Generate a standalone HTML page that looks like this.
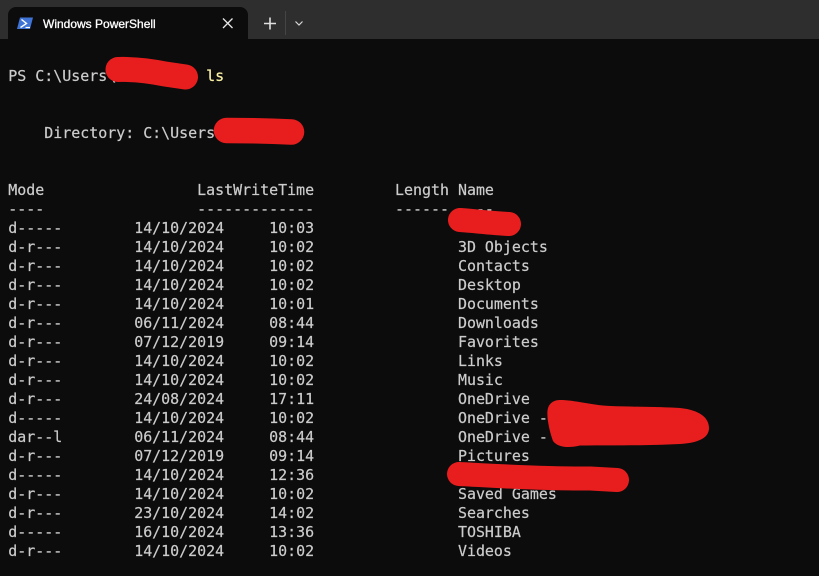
<!DOCTYPE html>
<html>
<head>
<meta charset="utf-8">
<style>
html,body{margin:0;padding:0;width:819px;height:576px;overflow:hidden;background:#0c0c0c}
#bar{position:absolute;left:0;top:0;width:819px;height:39px;background:#2e2e2e}
#tab{position:absolute;left:8px;top:7px;width:240px;height:32px;background:#0c0c0c;border-radius:8px 8px 0 0}
#title{position:absolute;left:43px;top:15px;font:12px/18px "Liberation Sans",sans-serif;-webkit-text-stroke:0.3px #fff;color:#fff;white-space:pre}
pre{position:absolute;left:8.300px;top:67px;margin:0;font:14.95px/19px "DejaVu Sans Mono",monospace;-webkit-text-stroke:0.2px #cccccc;color:#cccccc;white-space:pre}
.y{color:#f9f1a5;-webkit-text-stroke:0.2px #f9f1a5}
svg{position:absolute;left:0;top:0}
</style>
</head>
<body>
<div id="bar"></div>
<div id="tab"></div>
<div id="title">Windows PowerShell</div>
<pre>PS C:\Users\          <span class="y">ls</span>


    Directory: C:\Users


Mode                 LastWriteTime         Length Name
----                 -------------         ------ ----
d-----        14/10/2024     10:03
d-r---        14/10/2024     10:02                3D Objects
d-r---        14/10/2024     10:02                Contacts
d-r---        14/10/2024     10:02                Desktop
d-r---        14/10/2024     10:01                Documents
d-r---        06/11/2024     08:44                Downloads
d-r---        07/12/2019     09:14                Favorites
d-r---        14/10/2024     10:02                Links
d-r---        14/10/2024     10:02                Music
d-r---        24/08/2024     17:11                OneDrive
d-----        14/10/2024     10:02                OneDrive -
dar--l        06/11/2024     08:44                OneDrive -
d-r---        07/12/2019     09:14                Pictures
d-----        14/10/2024     12:36
d-r---        14/10/2024     10:02                Saved Games
d-r---        23/10/2024     14:02                Searches
d-----        16/10/2024     13:36                TOSHIBA
d-r---        14/10/2024     10:02                Videos</pre>
<svg width="819" height="576" viewBox="0 0 819 576" fill="none">
  <path d="M20 17.5 H33 L30 29 H17 Z" fill="#3f74d6"/>
  <path d="M21.5 19.5 L26.5 23.5 L20.5 27.5" stroke="#fff" stroke-width="1.4"/>
  <path d="M25.5 27.5 H30" stroke="#fff" stroke-width="1.2"/>
  <path d="M223 18.5 L232.5 28 M232.5 18.5 L223 28" stroke="#e6e6e6" stroke-width="1.3"/>
  <path d="M264 23.5 H276 M270 17.5 V29.5" stroke="#e0e0e0" stroke-width="1.6"/>
  <path d="M285.5 11 V35" stroke="#454545" stroke-width="1"/>
  <path d="M295.5 21.5 L299 25 L302.5 21.5" stroke="#d8d8d8" stroke-width="1.2"/>
  <g stroke="#e81e1e" stroke-linecap="round" stroke-linejoin="round">
    <path d="M118 69.500 C135 69 150 71 165 74 L185.500 77" stroke-width="25"/>
    <path d="M226.500 130.500 C245 130.500 270 131 291.500 132" stroke-width="25.500"/>
    <path d="M460 220 C475 221 490 223 509 224" stroke-width="24"/>
    <path d="M459 474 C490 475.500 540 479 590 478.500 L617 480" stroke-width="24"/>
  </g>
  <path d="M560 400 C575 400 590 405 610 406 C640 407 665 407 680 408 C700 410 709 418 709 428 C709 438 698 443 680 444 C640 446 610 445 580 445.500 C570 448 558 448 553 441 C549 430 546 415 548 408 C550 402 555 400 560 400 Z" fill="#e81e1e"/>
</svg>
</body>
</html>
